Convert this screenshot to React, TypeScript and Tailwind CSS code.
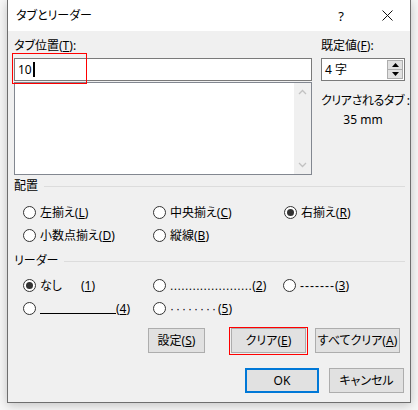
import React from "react";

const FONT = { fontFamily: '"Noto Sans", "Noto Sans CJK JP", sans-serif' };
const LATIN = { fontFamily: '"Liberation Sans", sans-serif' };

function Radio({ checked = false }: { checked?: boolean }) {
  return (
    <span className="w-[13px] h-[13px] rounded-full border border-[#333333] bg-white flex items-center justify-center shrink-0">
      {checked && <span className="w-[7px] h-[7px] rounded-full bg-[#333333]" />}
    </span>
  );
}

function Option({ checked, children }: { checked?: boolean; children: React.ReactNode }) {
  return (
    <div className="flex items-center gap-[4px] whitespace-nowrap">
      <Radio checked={checked} />
      <span className="flex items-baseline">{children}</span>
    </div>
  );
}

function Section({ title }: { title: string }) {
  return (
    <div className="flex items-center gap-[6px] h-[16px]">
      <span>{title}</span>
      <span className="flex-1 h-px bg-[#dcdcdc]" />
    </div>
  );
}

function Button({ children, width, primary }: { children: React.ReactNode; width: string; primary?: boolean }) {
  return (
    <div
      className={`${width} h-[25px] flex items-center justify-center whitespace-nowrap bg-[#e1e1e1] ${
        primary ? "border-2 border-[#0078d7]" : "border border-[#adadad]"
      }`}
    >
      {children}
    </div>
  );
}

function Chevron({ up }: { up?: boolean }) {
  return (
    <svg width="9" height="6" viewBox="0 0 9 6">
      <polyline
        points={up ? "1,5 4.5,1.5 8,5" : "1,1 4.5,4.5 8,1"}
        fill="none"
        stroke="#c2c2c2"
        strokeWidth="1.3"
      />
    </svg>
  );
}

export default function App() {
  return (
    <div
      className="w-[418px] h-[410px] bg-[#f7f7f7] relative overflow-hidden text-[12px] leading-[16px] text-black [font-feature-settings:'palt']"
      style={FONT}
    >
      <div className="ml-[7px] w-[404px] h-[403px] border border-t-0 border-[#6e6e6e] bg-[#f0f0f0] shadow-[0_2px_10px_rgba(0,0,0,0.22)] flex flex-col">
        {/* title bar */}
        <div className="h-[31px] bg-white flex items-center shrink-0">
          <span className="pl-[8px] flex-1">タブとリーダー</span>
          <div className="w-[46px] h-full flex items-center justify-center text-[13px]">?</div>
          <div className="w-[46px] h-full flex items-center justify-center">
            <svg width="11" height="11" viewBox="0 0 11 11">
              <path d="M0.5 0.5 L10.5 10.5 M10.5 0.5 L0.5 10.5" stroke="#111" strokeWidth="1" />
            </svg>
          </div>
        </div>

        {/* body */}
        <div className="flex flex-col pl-[6px] pr-[5px]">
          <div className="flex gap-[9px]">
            <div className="w-[298px] flex flex-col">
              <div className="h-[27px] flex items-end pb-[4px]">
                <span>タブ位置(<u>T</u>):</span>
              </div>
              <div className="h-[23px] border border-[#7a7a7a] bg-white flex items-center pl-[3px]">
                <span>10</span>
                <span className="w-[2px] h-[15px] bg-black ml-[1px]" />
              </div>
              <div className="mt-[1px] h-[93px] border border-[#828790] bg-white flex justify-end">
                <div className="w-[17px] bg-[#f0f0f0] flex flex-col items-center justify-between py-[6px]">
                  <Chevron up />
                  <Chevron />
                </div>
              </div>
            </div>

            <div className="w-[84px] flex flex-col">
              <div className="h-[27px] flex items-end pb-[4px]">
                <span>既定値(<u>F</u>):</span>
              </div>
              <div className="h-[23px] border border-[#7a7a7a] bg-white flex items-center">
                <span className="pl-[3px] flex-1">4 字</span>
                <div className="w-[17px] h-full flex flex-col py-[1px] pr-[1px]">
                  <div className="h-[10px] bg-[#e1e1e1] border border-[#adadad] flex items-center justify-center">
                    <svg width="7" height="4" viewBox="0 0 7 4">
                      <path d="M0 4 L3.5 0 L7 4 Z" fill="#000" />
                    </svg>
                  </div>
                  <div className="h-[9px] bg-[#e1e1e1] border border-t-0 border-[#adadad] flex items-center justify-center">
                    <svg width="7" height="4" viewBox="0 0 7 4">
                      <path d="M0 0 L7 0 L3.5 4 Z" fill="#000" />
                    </svg>
                  </div>
                </div>
              </div>
              <div className="mt-[12px] whitespace-nowrap tracking-[-0.4px]">クリアされるタブ :</div>
              <div className="mt-[3px] text-center">35 mm</div>
            </div>
          </div>

          {/* alignment */}
          <div className="mt-[3px]">
            <Section title="配置" />
          </div>
          <div className="mt-[7px] pl-[9px] grid grid-cols-[130px_131px_1fr] grid-rows-[23px_23px] items-center">
            <Option>
              左揃え(<u>L</u>)
            </Option>
            <Option>
              中央揃え(<u>C</u>)
            </Option>
            <Option checked>
              右揃え(<u>R</u>)
            </Option>
            <Option>
              小数点揃え(<u>D</u>)
            </Option>
            <Option>
              縦線(<u>B</u>)
            </Option>
            <div />
          </div>

          {/* leader */}
          <div className="mt-[6px]">
            <Section title="リーダー" />
          </div>
          <div className="mt-[5px] pl-[9px] grid grid-cols-[130px_130px_1fr] grid-rows-[23px_23px] items-center">
            <Option checked>
              なし<span className="ml-[19px]">(<u>1</u>)</span>
            </Option>
            <Option>
              <span className="tracking-[0.4px]" style={LATIN}>
                ......................
              </span>
              (<u>2</u>)
            </Option>
            <Option>
              <span className="tracking-[1px]" style={LATIN}>
                -------
              </span>
              (<u>3</u>)
            </Option>
            <Option>
              <span className="w-[76px] border-b border-black self-end mb-[3px]" />
              (<u>4</u>)
            </Option>
            <Option>
              <span className="tracking-[2px]" style={LATIN}>
                ········
              </span>
              (<u>5</u>)
            </Option>
            <div />
          </div>

          {/* buttons */}
          <div className="mt-[8px] flex justify-end pr-[5px]">
            <Button width="w-[57px]">
              設定(<u>S</u>)
            </Button>
            <div className="ml-[26px]">
              <Button width="w-[75px]">
                クリア(<u>E</u>)
              </Button>
            </div>
            <div className="ml-[9px]">
              <Button width="w-[85px]">
                すべてクリア(<u>A</u>)
              </Button>
            </div>
          </div>
          <div className="mt-[15px] flex justify-end pr-[1px] gap-[10px]">
            <Button width="w-[74px]" primary>
              OK
            </Button>
            <Button width="w-[75px]">キャンセル</Button>
          </div>
        </div>
      </div>

      {/* annotation boxes */}
      <div className="absolute left-[12px] top-[53px] w-[75px] h-[31px] border border-[#ff0000] pointer-events-none" />
      <div className="absolute left-[229px] top-[327px] w-[79px] h-[28px] border border-[#ff0000] pointer-events-none" />
    </div>
  );
}
